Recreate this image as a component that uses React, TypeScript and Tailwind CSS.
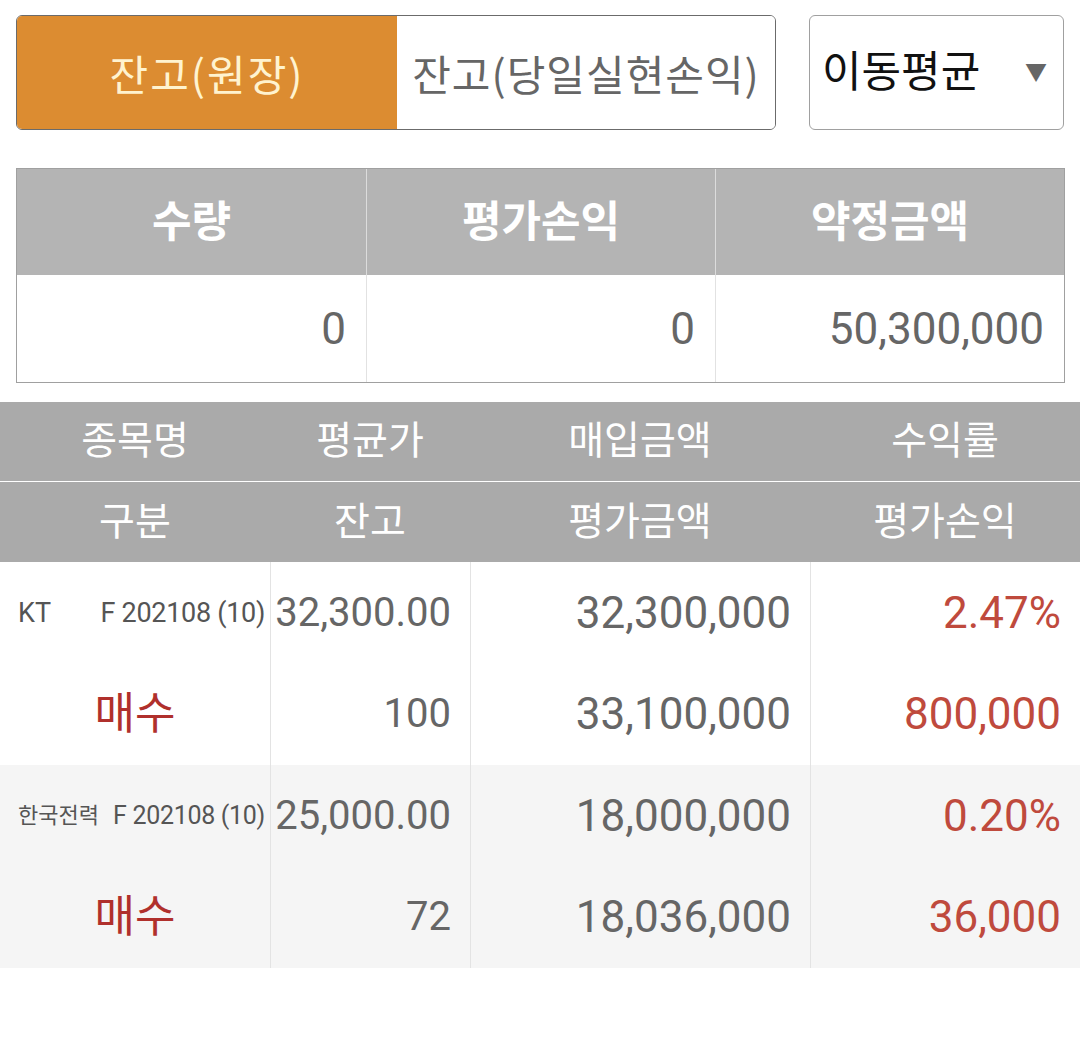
import React from 'react';

const font = { fontFamily: 'Roboto, "Noto Sans CJK KR", sans-serif' };
const krFont = { fontFamily: '"Noto Sans CJK KR", Roboto, sans-serif' };

const rows = [
  {
    name: 'KT',
    code: 'F 202108 (10)',
    side: '매수',
    avg: '32,300.00',
    qty: '100',
    buy: '32,300,000',
    evalAmt: '33,100,000',
    rate: '2.47%',
    pl: '800,000',
    bg: 'bg-white',
    small: false,
  },
  {
    name: '한국전력',
    code: 'F 202108 (10)',
    side: '매수',
    avg: '25,000.00',
    qty: '72',
    buy: '18,000,000',
    evalAmt: '18,036,000',
    rate: '0.20%',
    pl: '36,000',
    bg: 'bg-[#f5f5f5]',
    small: true,
  },
];

export default function App() {
  return (
    <div className="w-[1080px] h-[1050px] bg-white" style={font}>
      {/* top controls */}
      <div className="flex items-stretch gap-[33px] pl-[16px] pr-[16px] pt-[15px]">
        <div className="flex w-[760px] h-[115px] rounded-[6px] border border-[#6b6b6b] overflow-hidden" style={krFont}>
          <button className="w-[380px] bg-[#dc8c31] text-[#fff3cf] text-[42px] tracking-[2px] flex items-center justify-center">
            잔고(원장)
          </button>
          <button className="flex-1 bg-white text-[#666] text-[42px] tracking-[1px] flex items-center justify-center">
            잔고(당일실현손익)
          </button>
        </div>
        <div className="flex-1 h-[115px] rounded-[6px] border border-[#a0a0a0] flex items-center justify-between pl-[12px] pr-[16px]">
          <span className="text-[43px] text-[#111]">이동평균</span>
          <span className="text-[22px] text-[#666]">▼</span>
        </div>
      </div>

      {/* summary */}
      <div className="ml-[16px] mr-[15px] mt-[38px] border border-[#a0a0a0]">
        <div className="grid grid-cols-3 h-[106px] bg-[#b4b4b4] text-white font-bold text-[43px]">
          <div className="flex items-center justify-center">수량</div>
          <div className="flex items-center justify-center border-l border-[#dcdcdc]">평가손익</div>
          <div className="flex items-center justify-center border-l border-[#dcdcdc]">약정금액</div>
        </div>
        <div className="grid grid-cols-3 h-[107px] text-[#666] text-[44px]">
          <div className="flex items-center justify-end pr-[20px]">0</div>
          <div className="flex items-center justify-end pr-[20px] border-l border-[#e2e2e2]">0</div>
          <div className="flex items-center justify-end pr-[20px] border-l border-[#e2e2e2]">50,300,000</div>
        </div>
      </div>

      {/* position list header */}
      <div className="mt-[19px] bg-[#aaaaaa] text-white text-[39px]">
        <div className="grid grid-cols-[270px_200px_340px_270px] h-[80px] border-b border-white">
          <div className="flex items-center justify-center">종목명</div>
          <div className="flex items-center justify-center">평균가</div>
          <div className="flex items-center justify-center">매입금액</div>
          <div className="flex items-center justify-center">수익률</div>
        </div>
        <div className="grid grid-cols-[270px_200px_340px_270px] h-[80px]">
          <div className="flex items-center justify-center">구분</div>
          <div className="flex items-center justify-center">잔고</div>
          <div className="flex items-center justify-center">평가금액</div>
          <div className="flex items-center justify-center">평가손익</div>
        </div>
      </div>

      {/* positions */}
      {rows.map((r) => (
        <div key={r.name} className={`grid grid-cols-[270px_200px_340px_270px] h-[203px] ${r.bg}`}>
          <div className="grid grid-rows-2">
            <div className="flex items-center justify-between pl-[18px] pr-[5px] text-[#555]">
              <span className={r.small ? 'text-[22px]' : 'text-[27px]'}>{r.name}</span>
              <span className={r.small ? 'text-[25px] tracking-[-0.3px]' : 'text-[27px] tracking-[-0.3px]'}>{r.code}</span>
            </div>
            <div className="flex items-center justify-center text-[44px] text-[#b0302c]">{r.side}</div>
          </div>
          <div className="grid grid-rows-2 border-l border-[#e3e3e3] text-[#666] text-[40px]">
            <div className="flex items-center justify-end pr-[19px]">{r.avg}</div>
            <div className="flex items-center justify-end pr-[19px]">{r.qty}</div>
          </div>
          <div className="grid grid-rows-2 border-l border-[#e3e3e3] text-[#666] text-[44px]">
            <div className="flex items-center justify-end pr-[19px]">{r.buy}</div>
            <div className="flex items-center justify-end pr-[19px]">{r.evalAmt}</div>
          </div>
          <div className="grid grid-rows-2 border-l border-[#e3e3e3] text-[#bf4a3d] text-[44px]">
            <div className="flex items-center justify-end pr-[19px]">{r.rate}</div>
            <div className="flex items-center justify-end pr-[19px]">{r.pl}</div>
          </div>
        </div>
      ))}
    </div>
  );
}
